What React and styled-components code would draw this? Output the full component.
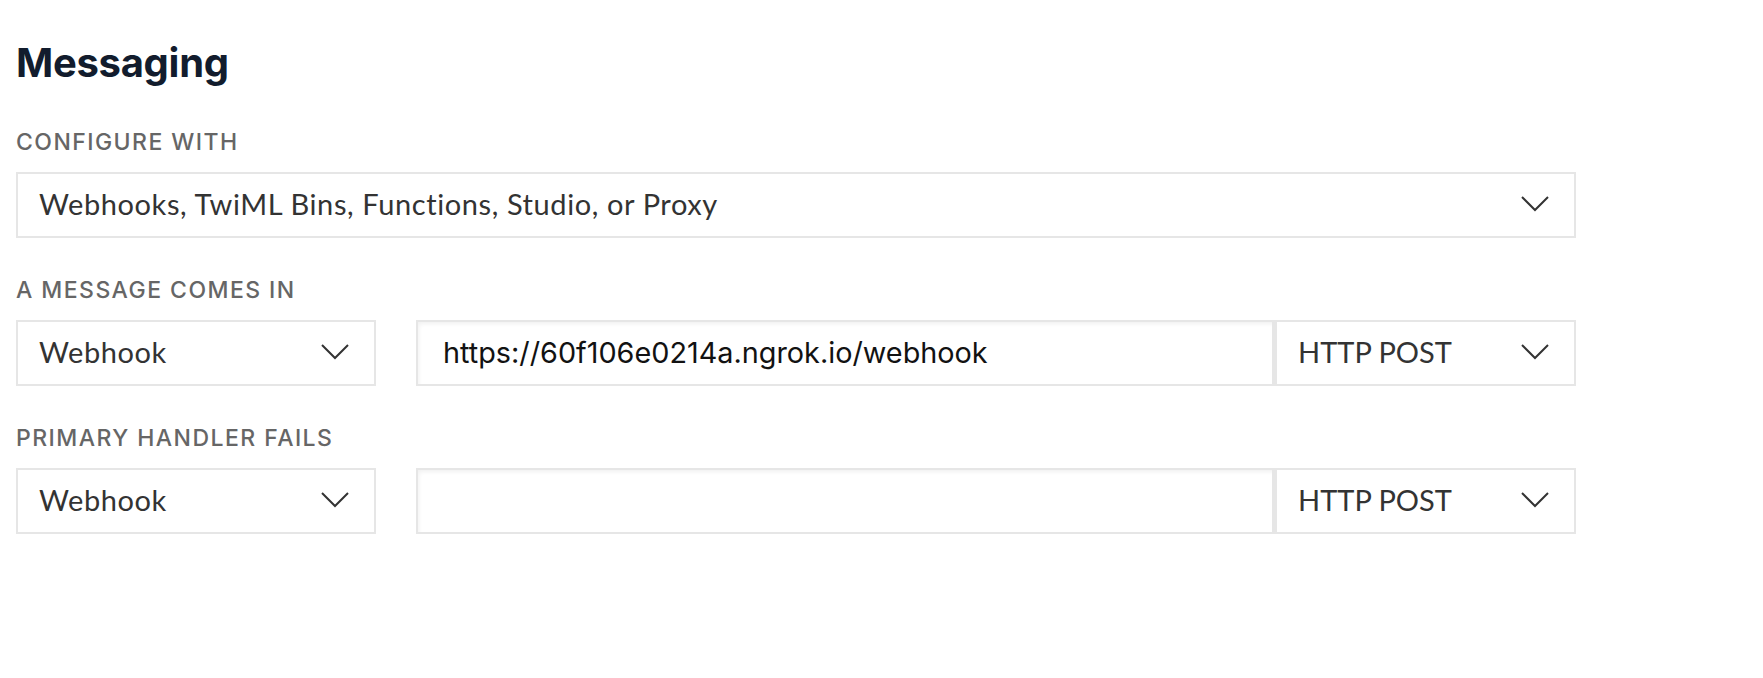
import React from "react";
import styled, { createGlobalStyle } from "styled-components";

const Global = createGlobalStyle`
  html, body { margin: 0; padding: 0; background: #ffffff; }
  body { font-family: Inter, "Liberation Sans", sans-serif; }
  * { box-sizing: border-box; }
`;

const Page = styled.div`
  padding: 38px 16px 40px 16px;
  width: 1592px;
`;

const Heading = styled.h2`
  margin: 0 0 42px 0;
  font-family: Inter, sans-serif;
  font-weight: 700;
  font-size: 40px;
  line-height: 49px;
  color: #121c2d;
  letter-spacing: -0.3px;
`;

const Field = styled.div`
  display: flex;
  flex-direction: column;
  gap: 17px;
  margin-bottom: 39px;
`;

const Label = styled.div`
  font-family: Inter, sans-serif;
  font-weight: 500;
  font-size: 23px;
  line-height: 26px;
  letter-spacing: 1.45px;
  color: #666666;
  text-transform: uppercase;
`;

const Row = styled.div`
  display: flex;
  align-items: stretch;
  height: 66px;
`;

const SelectBox = styled.div`
  display: flex;
  align-items: center;
  justify-content: space-between;
  width: ${(p) => p.$width || "100%"};
  flex: ${(p) => (p.$width ? "none" : "1")};
  height: 66px;
  border: 2px solid #e6e6e6;
  background: #fff;
  padding: 0 24px 3px ${(p) => p.$padLeft || 21}px;
  font-family: Lato, "Noto Sans", sans-serif;
  font-size: 29px;
  letter-spacing: ${(p) => p.$spacing || "0.6px"};
  color: #333333;
`;

const Spacer = styled.div`
  width: 40px;
  flex: none;
`;

const UrlInput = styled.div`
  flex: 1;
  height: 66px;
  border: 2px solid #e6e6e6;
  border-right-width: 3px;
  background: #fff;
  box-shadow: inset 3px 4px 4px -2px rgba(0, 0, 0, 0.06);
  display: flex;
  align-items: center;
  padding: 0 0 2px 25px;
  font-family: Inter, sans-serif;
  font-size: 28.8px;
  color: #121212;
`;

const Chevron = () => (
  <svg width="30" height="18" viewBox="0 0 30 18" fill="none">
    <path d="M2 2 L15 15 L28 2" stroke="#333" strokeWidth="2" />
  </svg>
);

export default function App() {
  return (
    <>
      <Global />
      <Page>
        <Heading>Messaging</Heading>
        <Field>
          <Label>Configure with</Label>
          <Row>
            <SelectBox>
              <span>Webhooks, TwiML Bins, Functions, Studio, or Proxy</span>
              <Chevron />
            </SelectBox>
          </Row>
        </Field>
        <Field>
          <Label>A message comes in</Label>
          <Row>
            <SelectBox $width="360px">
              <span>Webhook</span>
              <Chevron />
            </SelectBox>
            <Spacer />
            <UrlInput>https://60f106e0214a.ngrok.io/webhook</UrlInput>
            <SelectBox $width="301px" $padLeft={21} $spacing="0px">
              <span>HTTP POST</span>
              <Chevron />
            </SelectBox>
          </Row>
        </Field>
        <Field>
          <Label>Primary handler fails</Label>
          <Row>
            <SelectBox $width="360px">
              <span>Webhook</span>
              <Chevron />
            </SelectBox>
            <Spacer />
            <UrlInput />
            <SelectBox $width="301px" $padLeft={21} $spacing="0px">
              <span>HTTP POST</span>
              <Chevron />
            </SelectBox>
          </Row>
        </Field>
      </Page>
    </>
  );
}
